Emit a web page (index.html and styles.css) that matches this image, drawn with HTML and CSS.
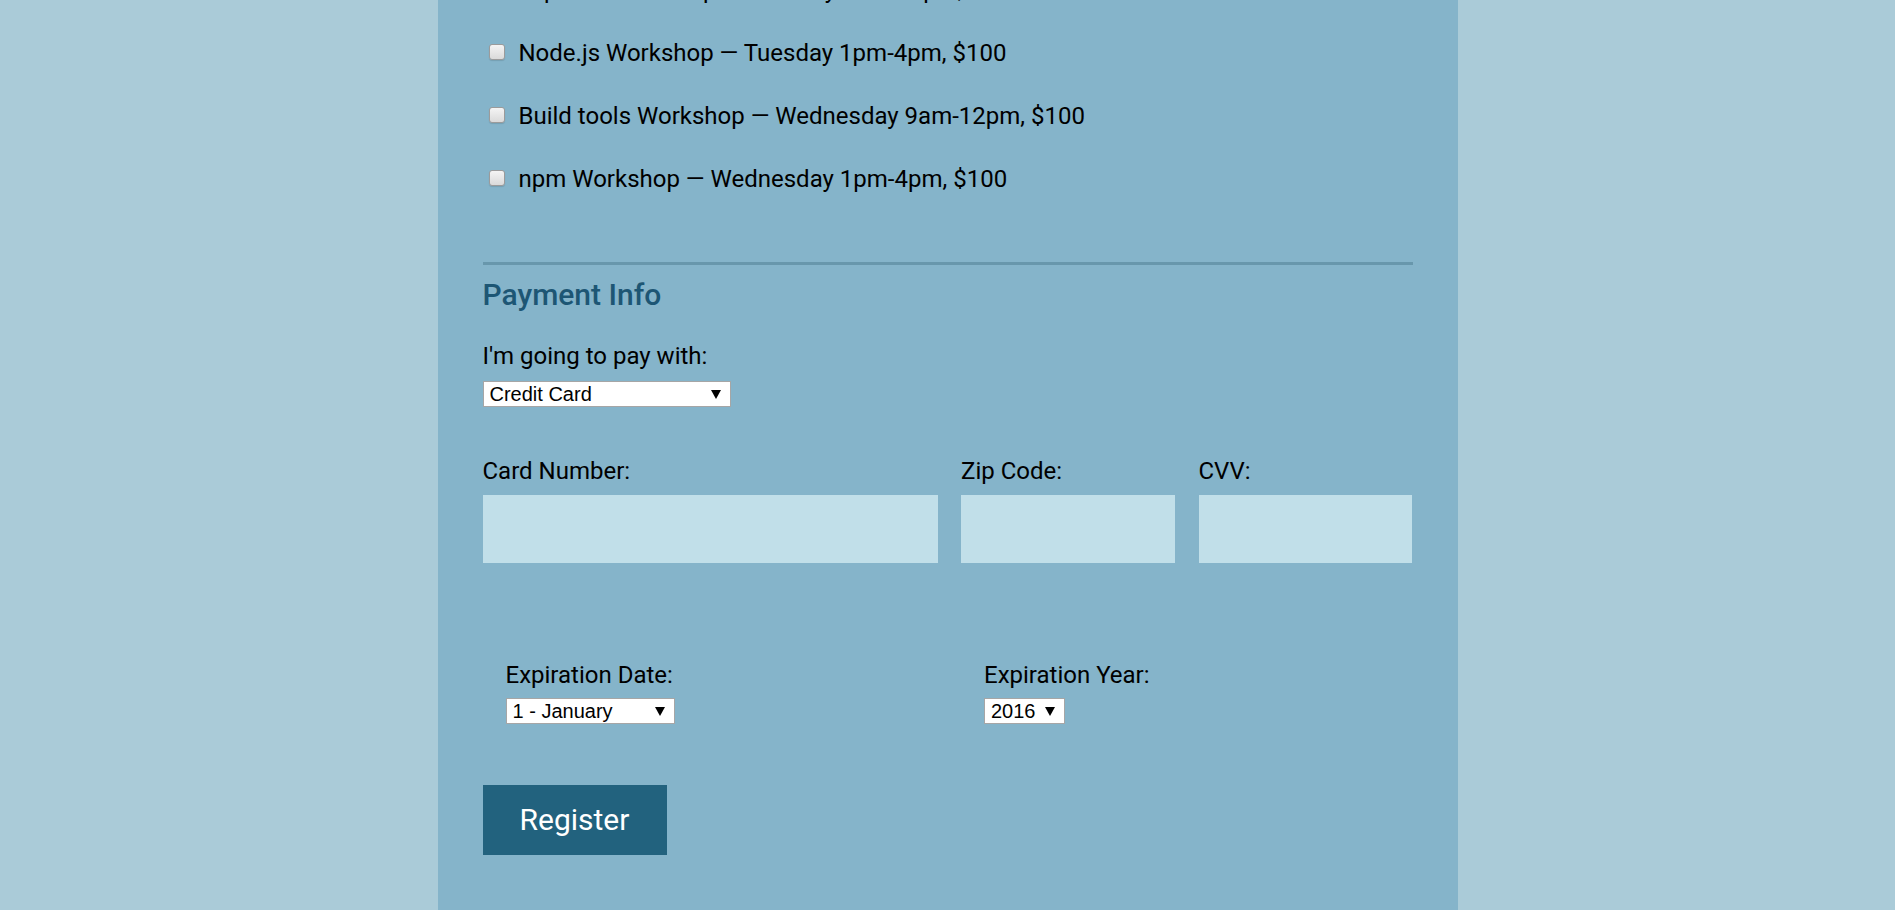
FILE: index.html
```html
<!DOCTYPE html>
<html lang="en">
<head>
<meta charset="utf-8">
<title>Register</title>
<link rel="stylesheet" href="styles.css">
</head>
<body>
<div class="container">
  <form class="form">
    <div class="activities">
      <label class="activity"><input type="checkbox" class="check"><span>Express Workshop — Tuesday 9am-12pm, $100</span></label>
      <label class="activity"><input type="checkbox" class="check"><span>Node.js Workshop — Tuesday 1pm-4pm, $100</span></label>
      <label class="activity"><input type="checkbox" class="check"><span>Build tools Workshop — Wednesday 9am-12pm, $100</span></label>
      <label class="activity"><input type="checkbox" class="check"><span>npm Workshop — Wednesday 1pm-4pm, $100</span></label>
    </div>

    <div class="rule"></div>

    <div class="payment">
      <h2 class="legend">Payment Info</h2>
      <label class="field-label pay-label" for="payment">I'm going to pay with:</label>
      <span class="select-wrap select-payment">
        <select id="payment" class="select"><option>Credit Card</option><option>PayPal</option><option>Bitcoin</option></select>
      </span>

      <div class="card-row">
        <div class="card-col">
          <label class="field-label" for="cc-num">Card Number:</label>
          <input class="text-input" id="cc-num" type="text">
        </div>
        <div class="card-col">
          <label class="field-label" for="zip">Zip Code:</label>
          <input class="text-input" id="zip" type="text">
        </div>
        <div class="card-col">
          <label class="field-label" for="cvv">CVV:</label>
          <input class="text-input" id="cvv" type="text">
        </div>
      </div>

      <div class="exp-row">
        <div class="exp-col">
          <label class="field-label" for="exp-month">Expiration Date:</label>
          <span class="select-wrap select-month">
            <select id="exp-month" class="select"><option>1 - January</option><option>2 - February</option></select>
          </span>
        </div>
        <div class="exp-col">
          <label class="field-label" for="exp-year">Expiration Year:</label>
          <span class="select-wrap select-year">
            <select id="exp-year" class="select"><option>2016</option><option>2017</option></select>
          </span>
        </div>
      </div>
    </div>

    <button type="submit" class="register">Register</button>
  </form>
</div>
</body>
</html>
```

FILE: styles.css
```css
* {
  box-sizing: border-box;
}

html,
body {
  margin: 0;
  padding: 0;
}

body {
  background: #aacbd8;
  font-family: Roboto, "Liberation Sans", Arial, sans-serif;
  color: #000;
}

.container {
  display: flow-root;
  width: 1020px;
  margin: 0 auto;
  padding: 0 45px 55px;
  background: #85b4ca;
}

.form {
  margin: 0;
}

/* activities list (page is scrolled, first row partly above the fold) */
.activities {
  display: flex;
  flex-direction: column;
  gap: 35px;
  margin-top: -24px;
}

.activity {
  display: flex;
  align-items: flex-start;
  height: 28px;
  padding-left: 6px;
  font-size: 24px;
  line-height: 28px;
}

.check {
  appearance: none;
  -webkit-appearance: none;
  flex: none;
  width: 16px;
  height: 16px;
  margin: 5px 14px 0 0;
  border: 1px solid #9b9b9b;
  border-radius: 3px;
  background: linear-gradient(#f4f4f4, #dadada);
  box-shadow: 0 1px 1px rgba(0, 0, 0, 0.12);
}

.rule {
  height: 3px;
  margin-top: 69px;
  background: #6897ac;
}

.legend {
  margin: 12px 0 0;
  font-size: 30px;
  line-height: 36px;
  font-weight: 500;
  color: #1d5674;
}

.field-label {
  display: block;
  font-size: 24px;
  line-height: 28px;
}

.pay-label {
  margin-top: 29px;
}

.select-wrap {
  position: relative;
  display: block;
  height: 26px;
}

.select-payment {
  width: 248px;
  margin-top: 11px;
}

.select-month {
  width: 169px;
  margin-top: 9px;
}

.select-year {
  width: 81px;
  margin-top: 9px;
}

.select-wrap::after {
  content: "";
  position: absolute;
  right: 10px;
  top: 9px;
  width: 0;
  height: 0;
  border-left: 5px solid transparent;
  border-right: 5px solid transparent;
  border-top: 9px solid #000;
  pointer-events: none;
}

.select {
  appearance: none;
  -webkit-appearance: none;
  display: block;
  width: 100%;
  height: 26px;
  margin: 0;
  padding: 0 0 0 6px;
  border: 1px solid #a6a6a6;
  border-radius: 0;
  background: #fff;
  color: #000;
  font-family: "Liberation Sans", Arial, sans-serif;
  font-size: 20px;
}

.card-row {
  display: grid;
  grid-template-columns: 455px 214px 213px;
  column-gap: 23.5px;
  margin-top: 50px;
}

.text-input {
  display: block;
  width: 100%;
  height: 68px;
  margin-top: 10px;
  border: 0;
  background: #c1dfe9;
  font-family: inherit;
  font-size: 24px;
}

.exp-row {
  display: grid;
  grid-template-columns: 478.5px 1fr;
  margin-top: 98px;
}

.exp-col {
  padding-left: 23px;
}

.register {
  display: block;
  width: 184px;
  height: 70px;
  margin-top: 61px;
  padding: 0;
  border: 0;
  background: #22627e;
  color: #fff;
  font-family: Roboto, "Liberation Sans", Arial, sans-serif;
  font-size: 30px;
  line-height: 70px;
}
```
